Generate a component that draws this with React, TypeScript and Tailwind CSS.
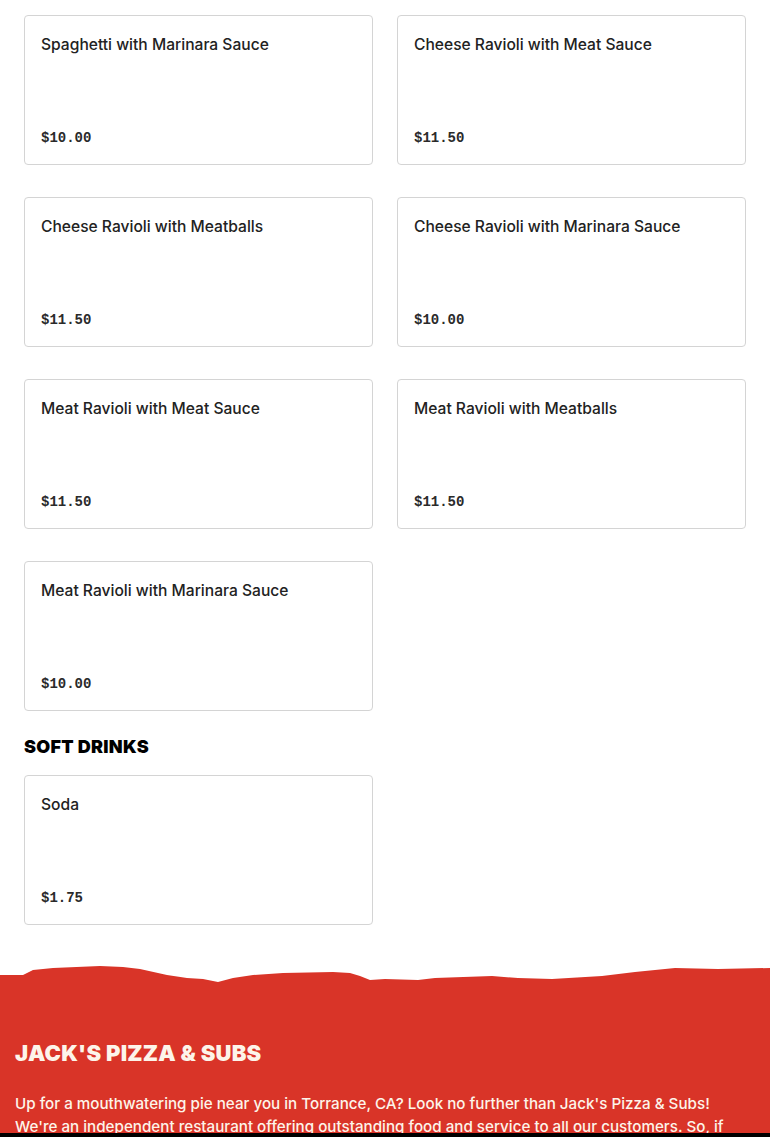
type Item = { name: string; price: string };

const pasta: Item[] = [
  { name: "Spaghetti with Marinara Sauce", price: "$10.00" },
  { name: "Cheese Ravioli with Meat Sauce", price: "$11.50" },
  { name: "Cheese Ravioli with Meatballs", price: "$11.50" },
  { name: "Cheese Ravioli with Marinara Sauce", price: "$10.00" },
  { name: "Meat Ravioli with Meat Sauce", price: "$11.50" },
  { name: "Meat Ravioli with Meatballs", price: "$11.50" },
  { name: "Meat Ravioli with Marinara Sauce", price: "$10.00" },
];

const drinks: Item[] = [{ name: "Soda", price: "$1.75" }];

const MenuCard = ({ item }: { item: Item }) => (
  <div className="h-[150px] flex flex-col justify-between border border-[#d4d4d4] rounded-[4px] bg-white px-4 pt-[17px] pb-[16px]">
    <p className="text-[15.6px] leading-6 font-medium text-[#222] font-['Inter',sans-serif]">{item.name}</p>
    <p className="text-[14px] leading-5 font-bold text-[#2a2a2a] font-['Liberation_Mono',monospace]">{item.price}</p>
  </div>
);

const App = () => {
  return (
    <div className="bg-white min-h-screen">
      <div className="px-6 pt-[15px]">
        <div className="grid grid-cols-2 gap-x-6 gap-y-8">
          {pasta.map((item) => (
            <MenuCard key={item.name} item={item} />
          ))}
        </div>

        <h2 className="mt-[22px] mb-[14px] text-[18px] leading-7 font-black uppercase tracking-[0.015em] text-black font-['Inter',sans-serif]">
          Soft Drinks
        </h2>
        <div className="grid grid-cols-2 gap-x-6 gap-y-8">
          {drinks.map((item) => (
            <MenuCard key={item.name} item={item} />
          ))}
        </div>
      </div>

      <footer className="mt-[35px]">
        {/* torn paper edge */}
        <svg viewBox="0 0 770 26" preserveAspectRatio="none" className="block w-full h-[26px]">
          <path
            fill="#d93428"
            d="M0 15 L23 15 L33 10 L53 8 L100 6 L123 7 L140 9 L167 15 L187 18 L203 19 L218 22 L233 18 L253 15 L283 13 L333 12 L350 13 L360 16 L370 20 L385 19 L418 20 L435 18 L492 16 L518 18 L552 19 L602 16 L635 12 L675 8 L718 9 L770 8 L770 26 L0 26 Z"
          />
        </svg>
        <div className="bg-[#d93428] px-[15px] pt-[53px] pb-10 font-['Inter',sans-serif]">
          <h2 className="text-[22px] leading-7 font-black uppercase tracking-[0.01em] text-[#fdf4ea]">Jack's Pizza &amp; Subs</h2>
          <p className="mt-[25px] text-[15.2px] leading-[23px] font-medium text-[#fdf4ea]">
            Up for a mouthwatering pie near you in Torrance, CA? Look no further than Jack's Pizza &amp; Subs!
            We're an independent restaurant offering outstanding food and service to all our customers. So, if
            you're craving pizza, subs or pasta, come on in and order today.
          </p>
        </div>
      </footer>

      <div className="fixed left-0 right-0 bottom-0 h-[4px] bg-black" />
    </div>
  );
};

export default App;
